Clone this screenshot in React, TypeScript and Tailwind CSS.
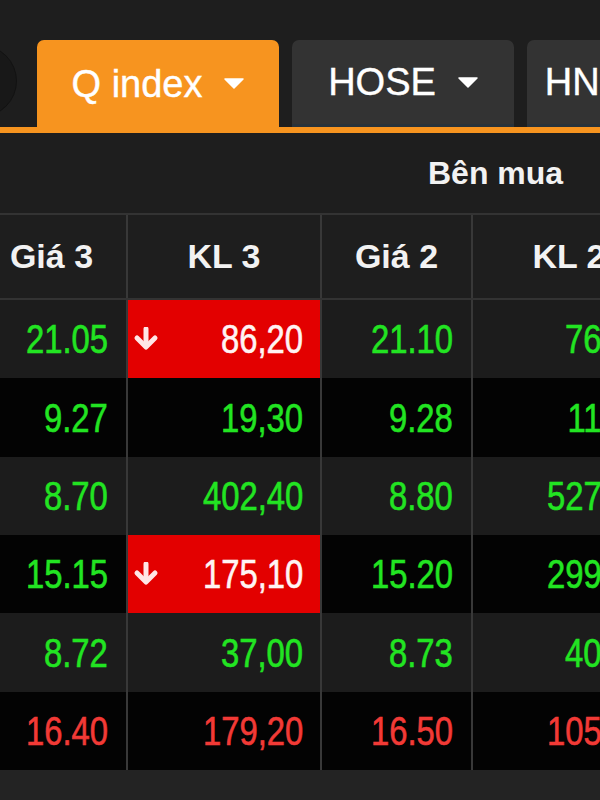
import React from "react";

type Row = {
  g3: string;
  k3: string;
  g2: string;
  k2: string;
  hl: boolean;
  color: string;
  h: string;
  bg: string;
};

const rows: Row[] = [
  { g3: "21.05", k3: "86,20", g2: "21.10", k2: "76,50", hl: true, color: "text-[#22e422]", h: "h-[78px]", bg: "bg-[#1c1c1c]" },
  { g3: "9.27", k3: "19,30", g2: "9.28", k2: "11,80", hl: false, color: "text-[#22e422]", h: "h-[79px]", bg: "bg-[#030303]" },
  { g3: "8.70", k3: "402,40", g2: "8.80", k2: "527,10", hl: false, color: "text-[#22e422]", h: "h-[78px]", bg: "bg-[#1c1c1c]" },
  { g3: "15.15", k3: "175,10", g2: "15.20", k2: "299,60", hl: true, color: "text-[#22e422]", h: "h-[78px]", bg: "bg-[#030303]" },
  { g3: "8.72", k3: "37,00", g2: "8.73", k2: "40,30", hl: false, color: "text-[#22e422]", h: "h-[79px]", bg: "bg-[#1c1c1c]" },
  { g3: "16.40", k3: "179,20", g2: "16.50", k2: "105,20", hl: false, color: "text-[#f23a36]", h: "h-[78px]", bg: "bg-[#030303]" },
];

const Caret = () => (
  <svg width="20" height="11" viewBox="0 0 20 11" className="shrink-0">
    <path d="M1 1 L19 1 L10 10 Z" fill="#ffffff" stroke="#ffffff" strokeWidth="1.5" strokeLinejoin="round" />
  </svg>
);

const DownArrow = () => (
  <svg width="28" height="24" viewBox="0 0 28 24" className="shrink-0">
    <path d="M14 2 L14 18" stroke="#ffe6e6" strokeWidth="5" strokeLinecap="round" />
    <path d="M5 11 L14 20 L23 11" stroke="#ffe6e6" strokeWidth="5" strokeLinecap="round" strokeLinejoin="round" fill="none" />
  </svg>
);

const Num = ({ v }: { v: string }) => (
  <span className="inline-block origin-right scale-x-[0.82] whitespace-nowrap [-webkit-text-stroke:0.6px_currentColor]">{v}</span>
);

export default function App() {
  return (
    <div className="w-[600px] h-[800px] overflow-hidden bg-[#1e1e1e] flex flex-col [font-family:'Liberation_Sans',Arial,sans-serif]">
      {/* Tabs */}
      <div className="pt-[40px] flex items-end h-[127px] shrink-0">
        <div className="w-[72px] h-[72px] rounded-full bg-[#181818] border border-[#121212] -ml-[55px] mr-[20px] self-center mt-[-6px] shrink-0" />
        <div className="flex items-end gap-[13px] h-[87px]">
          <div className="w-[242px] h-full rounded-t-[7px] bg-[#f7941f] flex items-center justify-center gap-[22px] shrink-0">
            <span className="text-white text-[38px] leading-none [-webkit-text-stroke:0.4px_currentColor]">Q index</span>
            <Caret />
          </div>
          <div className="w-[222px] h-full rounded-t-[7px] bg-[#333333] border-b-[3px] border-[#28323a] flex items-center justify-center gap-[22px] shrink-0">
            <span className="text-white text-[38px] leading-none [-webkit-text-stroke:0.4px_currentColor]">HOSE</span>
            <Caret />
          </div>
          <div className="w-[200px] h-full rounded-t-[7px] bg-[#333333] border-b-[3px] border-[#28323a] flex items-center justify-center gap-[22px] shrink-0">
            <span className="text-white text-[38px] leading-none [-webkit-text-stroke:0.4px_currentColor]">HNX30</span>
            <Caret />
          </div>
        </div>
      </div>
      <div className="h-[6px] bg-[#f7941f] shrink-0" />

      {/* Header 1 */}
      <div className="h-[82px] border-b-2 border-[#333333] flex items-center pl-[428px] shrink-0">
        <span className="text-[#f2f2f2] text-[32px] font-bold whitespace-nowrap">Bên mua</span>
      </div>

      {/* Table */}
      <div className="-ml-[23px] w-[690px] flex flex-col shrink-0">
        <div className="flex h-[85px] border-b-2 border-[#333333] text-[#f2f2f2] text-[34px] font-bold">
          <div className="w-[151px] border-r-2 border-[#383838] flex items-center justify-center">Giá 3</div>
          <div className="w-[194px] border-r-2 border-[#383838] flex items-center justify-center">KL 3</div>
          <div className="w-[151px] border-r-2 border-[#383838] flex items-center justify-center">Giá 2</div>
          <div className="w-[194px] border-r-2 border-[#383838] flex items-center justify-center">KL 2</div>
        </div>
        {rows.map((r, i) => (
          <div key={i} className={`flex ${r.h} ${r.bg} text-[40px] leading-none`}>
            <div className={`w-[151px] border-r-2 border-[#383838] flex items-center justify-end pr-[18px] ${r.color}`}>
              <Num v={r.g3} />
            </div>
            {r.hl ? (
              <div className="w-[194px] border-r-2 border-[#383838] flex items-center justify-between pl-[4px] pr-[17px] bg-[#e30000] text-[#fff4f4]">
                <DownArrow />
                <Num v={r.k3} />
              </div>
            ) : (
              <div className={`w-[194px] border-r-2 border-[#383838] flex items-center justify-end pr-[17px] ${r.color}`}>
                <Num v={r.k3} />
              </div>
            )}
            <div className={`w-[151px] border-r-2 border-[#383838] flex items-center justify-end pr-[18px] ${r.color}`}>
              <Num v={r.g2} />
            </div>
            <div className={`w-[194px] border-r-2 border-[#383838] flex items-center justify-end pr-[18px] ${r.color}`}>
              <Num v={r.k2} />
            </div>
          </div>
        ))}
      </div>
      <div className="flex-1 bg-[#232323]" />
    </div>
  );
}
